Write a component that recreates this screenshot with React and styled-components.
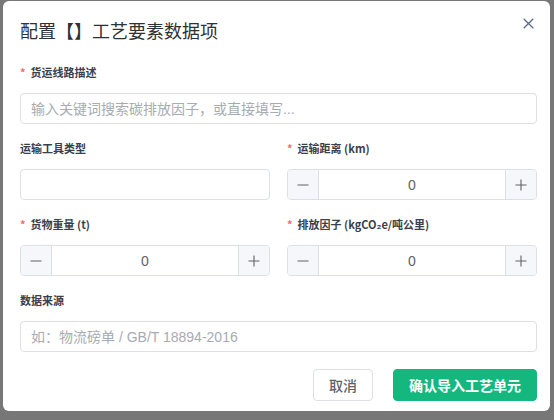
import React from "react";
import styled, { createGlobalStyle } from "styled-components";

const Global = createGlobalStyle`
  html, body { margin: 0; padding: 0; }
  body {
    background: #777777;
    font-family: "Liberation Sans", "Noto Sans CJK SC", sans-serif;
    width: 554px;
    height: 420px;
    overflow: hidden;
  }
  * { box-sizing: border-box; }
`;

const Overlay = styled.div`
  padding: 1px 4px 0 3px;
`;

const Dialog = styled.div`
  width: 547px;
  background: #ffffff;
  border-radius: 6px;
  padding: 17px 13px 10px 17px;
`;

const Header = styled.div`
  display: flex;
  justify-content: space-between;
  align-items: flex-start;
  margin-bottom: 21px;
`;

const Title = styled.h2`
  margin: 0;
  font-size: 18px;
  line-height: 24px;
  font-weight: 400;
  color: #303133;
  font-family: "Noto Sans CJK SC", "Liberation Sans", sans-serif;
`;

const Close = styled.button`
  border: none;
  background: none;
  padding: 0;
  margin: 0 3px 0 0;
  width: 11px;
  height: 11px;
  display: flex;
  cursor: pointer;
`;

const Form = styled.div`
  display: grid;
  grid-template-columns: 1fr 1fr;
  column-gap: 17px;
`;

const Item = styled.div`
  grid-column: ${(p) => (p.$full ? "1 / span 2" : "auto")};
  margin-bottom: 15px;
`;

const Label = styled.div`
  font-size: 11px;
  line-height: 18px;
  height: 18px;
  font-weight: 700;
  color: #3a3f4b;
  margin-bottom: 12px;
  font-family: "Noto Sans CJK SC", "Liberation Sans", sans-serif;
  display: flex;
  align-items: center;
`;

const Star = styled.span`
  color: #f56c6c;
  margin-right: 5px;
  font-weight: 700;
  font-size: 11px;
`;

const TextInput = styled.input`
  display: block;
  width: 100%;
  height: 31px;
  border: 1px solid #dcdfe6;
  border-radius: 4px;
  padding: 0 10px;
  font-size: 14px;
  color: #606266;
  font-family: "Liberation Sans", "Noto Sans CJK SC", sans-serif;
  outline: none;
  &::placeholder { color: #a8abb2; }
`;

const Number = styled.div`
  display: flex;
  height: 31px;
  border: 1px solid #dcdfe6;
  border-radius: 4px;
  overflow: hidden;
`;

const StepBtn = styled.button`
  width: 31px;
  flex: none;
  border: none;
  ${(p) => (p.$side === "left" ? "border-right" : "border-left")}: 1px solid #dcdfe6;
  background: #f5f7fa;
  display: flex;
  align-items: center;
  justify-content: center;
  padding: 0;
  cursor: pointer;
`;

const NumValue = styled.input`
  flex: 1;
  min-width: 0;
  border: none;
  outline: none;
  text-align: center;
  font-size: 14px;
  color: #606266;
  font-family: "Liberation Sans", sans-serif;
  background: #fff;
`;

const Footer = styled.div`
  display: flex;
  justify-content: flex-end;
  gap: 20px;
  margin-top: 2px;
`;

const Button = styled.button`
  height: 32px;
  border-radius: 4px;
  font-size: 14px;
  font-family: "Noto Sans CJK SC", "Liberation Sans", sans-serif;
  cursor: pointer;
  padding: 0;
  width: ${(p) => (p.$primary ? "144px" : "60px")};
  background: ${(p) => (p.$primary ? "#14b87f" : "#ffffff")};
  color: ${(p) => (p.$primary ? "#ffffff" : "#606266")};
  border: 1px solid ${(p) => (p.$primary ? "#14b87f" : "#dcdfe6")};
  font-weight: ${(p) => (p.$primary ? 700 : 500)};
`;

const Minus = () => (
  <svg width="12" height="12" viewBox="0 0 12 12">
    <path d="M0.5 6h11" stroke="#606266" strokeWidth="1.1" />
  </svg>
);
const Plus = () => (
  <svg width="12" height="12" viewBox="0 0 12 12">
    <path d="M0.5 6h11M6 0.5v11" stroke="#606266" strokeWidth="1.1" />
  </svg>
);

const NumberInput = () => (
  <Number>
    <StepBtn $side="left"><Minus /></StepBtn>
    <NumValue defaultValue="0" />
    <StepBtn $side="right"><Plus /></StepBtn>
  </Number>
);

export default function App() {
  return (
    <>
      <Global />
      <Overlay>
        <Dialog>
          <Header>
            <Title>配置【】工艺要素数据项</Title>
            <Close aria-label="close">
              <svg width="11" height="11" viewBox="0 0 11 11">
                <path d="M0.7 0.7l9.6 9.6M10.3 0.7l-9.6 9.6" stroke="#5b6b86" strokeWidth="1.3" />
              </svg>
            </Close>
          </Header>
          <Form>
            <Item $full>
              <Label><Star>*</Star>货运线路描述</Label>
              <TextInput placeholder="输入关键词搜索碳排放因子，或直接填写..." />
            </Item>
            <Item>
              <Label>运输工具类型</Label>
              <TextInput />
            </Item>
            <Item>
              <Label><Star>*</Star>运输距离 (km)</Label>
              <NumberInput />
            </Item>
            <Item>
              <Label><Star>*</Star>货物重量 (t)</Label>
              <NumberInput />
            </Item>
            <Item>
              <Label><Star>*</Star>排放因子 (kgCO₂e/吨公里)</Label>
              <NumberInput />
            </Item>
            <Item $full>
              <Label>数据来源</Label>
              <TextInput placeholder="如：物流磅单 / GB/T 18894-2016" />
            </Item>
          </Form>
          <Footer>
            <Button>取消</Button>
            <Button $primary>确认导入工艺单元</Button>
          </Footer>
        </Dialog>
      </Overlay>
    </>
  );
}
